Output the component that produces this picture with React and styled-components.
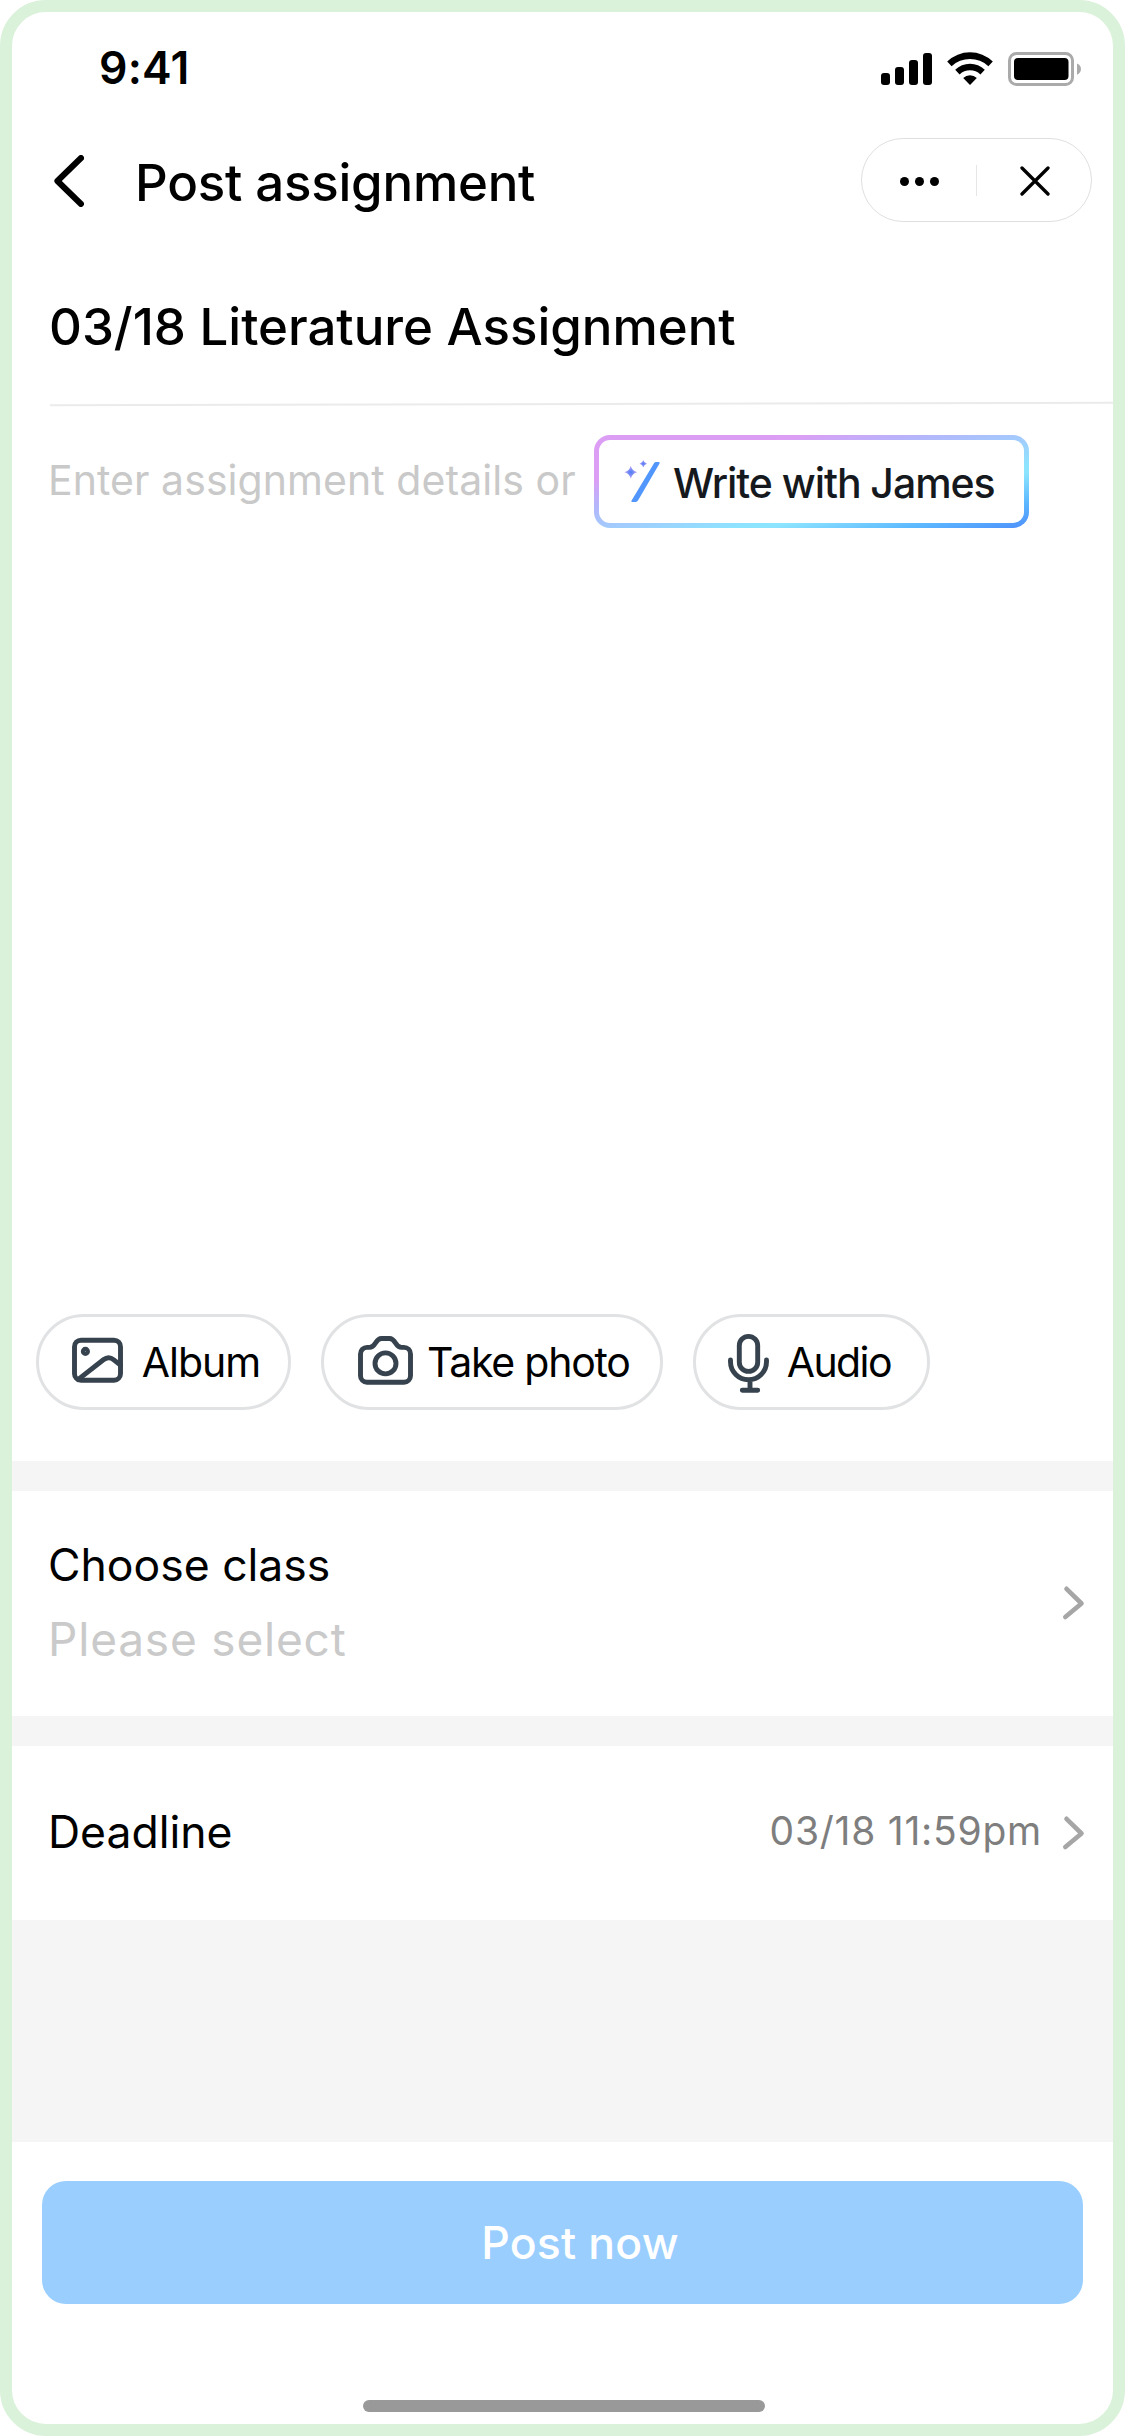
import React from 'react';
import styled, { createGlobalStyle } from 'styled-components';

const GlobalStyle = createGlobalStyle`
  * {
    box-sizing: border-box;
  }
  body {
    margin: 0;
    background: #fff;
    font-family: Inter, 'Liberation Sans', sans-serif;
  }
`;
const Phone = styled.div`
  width: 1125px;
  height: 2436px;
  display: flex;
  flex-direction: column;
  border: 12px solid #daf1da;
  border-radius: 46px;
  background: #fff;
  color: #000;
  overflow: hidden;
`;
const StatusBar = styled.div`
  height: 112px;
  display: flex;
  align-items: center;
  justify-content: space-between;
  padding: 0 31px 0 87px;
  flex-shrink: 0;
`;
const Clock = styled.span`
  font-size: 44.5px;
  font-weight: 600;
  letter-spacing: 0.2px;
`;
const StatusIcons = styled.svg`
  margin-top: 2px;
`;
const Header = styled.div`
  height: 114px;
  display: flex;
  align-items: center;
  padding: 0 21px 0 42px;
  flex-shrink: 0;
`;
const HeaderTitle = styled.h1`
  margin: 4px 0 0 51px;
  font-size: 51px;
  line-height: 60px;
  font-weight: 500;
  letter-spacing: -0.25px;
`;
const Capsule = styled.div`
  width: 231px;
  height: 84px;
  margin: 0 0 2px auto;
  display: flex;
  align-items: center;
  border: 1.5px solid #dfdfdf;
  border-radius: 42px;
`;
const CapsuleButton = styled.div`
  width: 115px;
  display: flex;
  justify-content: center;
  padding: 2px 0 0 2px;
`;
const CapsuleLine = styled.div`
  width: 2px;
  height: 31px;
  background: #e6e6e6;
`;
const AssignmentTitle = styled.h2`
  height: 165px;
  margin: 0;
  padding: 59px 0 0 37px;
  font-size: 51px;
  line-height: 60px;
  font-weight: 500;
  letter-spacing: -0.02px;
  flex-shrink: 0;
`;
const TitleDivider = styled.div`
  height: 2px;
  margin-left: 38px;
  background: #ebebeb;
  transform: rotate(-0.145deg);
  flex-shrink: 0;
`;
const Editor = styled.div`
  height: 909px;
  display: flex;
  align-items: flex-start;
  padding: 30px 0 0 36px;
  flex-shrink: 0;
`;
const Placeholder = styled.div`
  width: 546px;
  font-size: 41px;
  line-height: 91px;
  letter-spacing: 0.06px;
  color: #c9c9c9;
  white-space: nowrap;
`;
const WriteButton = styled.div`
  width: 435px;
  height: 93px;
  display: flex;
  align-items: center;
  padding-left: 24px;
  border: 5px solid transparent;
  border-radius: 16px;
  background:
    linear-gradient(#fff, #fff) padding-box,
    linear-gradient(to bottom right, #dc9ef5 24%, #b5b5fb 38%, #8de4ff 66%, #8de4ff 70%, #5cb8ff 86%, #4d8ffb 100%) border-box;
`;
const WriteLabel = styled.span`
  margin: 3px 0 0 11px;
  font-size: 41px;
  line-height: 60px;
  font-weight: 500;
  letter-spacing: -1.05px;
  color: #15191d;
  white-space: nowrap;
`;
const Chips = styled.div`
  height: 147px;
  display: flex;
  align-items: flex-start;
  gap: 30px;
  padding-left: 24px;
  flex-shrink: 0;
`;
const Chip = styled.div`
  width: ${(props) => props.$width}px;
  height: 96px;
  display: flex;
  align-items: center;
  gap: ${(props) => props.$gap}px;
  padding-left: ${(props) => props.$pad}px;
  border: 3px solid #e1e2e4;
  border-radius: 48px;
  font-size: 41px;
  letter-spacing: ${(props) => props.$spacing}px;
  white-space: nowrap;
`;
const ChipIcon = styled.svg`
  height: 64px;
  fill: none;
  stroke: #36424d;
  stroke-width: 4.9;
  stroke-linecap: round;
  stroke-linejoin: round;
`;
const Band = styled.div`
  height: ${(props) => props.$height}px;
  background: #f5f5f5;
  flex-shrink: 0;
`;
const OptionRow = styled.div`
  height: ${(props) => props.$height}px;
  display: flex;
  align-items: center;
  padding: 0 28px 0 36px;
  flex-shrink: 0;
`;
const OptionText = styled.div`
  display: flex;
  flex-direction: column;
  gap: 14px;
  margin-right: auto;
  padding-bottom: 3px;
`;
const OptionLabel = styled.div`
  font-size: 44.5px;
  line-height: 60px;
`;
const OptionHint = styled.div`
  font-size: 46px;
  line-height: 60px;
  letter-spacing: 0.81px;
  color: #cacaca;
`;
const OptionValue = styled.div`
  margin: 0 20px 4px 0;
  font-size: 39px;
  line-height: 60px;
  letter-spacing: 0.76px;
  color: #7e7e7e;
`;
const Arrow = styled.svg`
  margin-bottom: 1px;
  fill: none;
  stroke: #a6a6a6;
  stroke-width: 4.6;
  stroke-linecap: round;
  stroke-linejoin: round;
`;
const Footer = styled.div`
  flex: 1;
  display: flex;
  flex-direction: column;
  justify-content: space-between;
  padding: 39px 30px 12px;
`;
const PostButton = styled.div`
  height: 123px;
  display: flex;
  align-items: center;
  justify-content: center;
  padding: 1px 0 0 35px;
  border-radius: 24px;
  background: #99ceff;
  color: #fff;
  font-size: 44.5px;
  font-weight: 500;
  letter-spacing: 0.2px;
`;
const HomeIndicator = styled.div`
  width: 402px;
  height: 12px;
  margin-left: 321px;
  border-radius: 6px;
  background: #999;
`;

const StatusGlyphs = () => (
  <StatusIcons width="201" height="34" viewBox="0 0 201 34">
    <rect x="0" y="21" width="9" height="12" rx="3" />
    <rect x="14" y="15" width="9" height="18" rx="3" />
    <rect x="28" y="8" width="9" height="25" rx="3" />
    <rect x="42" y="1" width="9" height="32" rx="3" />
    <path d="M66.2 9.5 A33 33 0 0 1 111.8 9.5 L107.4 14.2 A27 27 0 0 0 70.6 14.2 Z" />
    <path d="M74.2 17.8 A21.3 21.3 0 0 1 103.8 17.8 L99.4 22.5 A15 15 0 0 0 78.6 22.5 Z" />
    <path d="M82.2 26.1 A9.8 9.8 0 0 1 95.8 26.1 L89 33 Z" />
    <rect x="128.5" y="1.5" width="63" height="31" rx="7" fill="none" stroke="#aaa" strokeWidth="3" />
    <rect x="133" y="6" width="54.5" height="22" rx="4" />
    <path d="M196 11.5 C201.3 13.5 201.3 20.5 196 22.8 Z" fill="#aaa" />
  </StatusIcons>
);

const RightArrow = () => (
  <Arrow width="23" height="36" viewBox="0 0 23 36">
    <path d="M4.5 3.8 L19.5 18.5 L3.3 32" />
  </Arrow>
);

const App = () => (
  <>
    <GlobalStyle />
    <Phone>
      <StatusBar>
        <Clock>9:41</Clock>
        <StatusGlyphs />
      </StatusBar>

      <Header>
        <svg width="30" height="52" viewBox="0 0 30 52" fill="none" stroke="#000" strokeWidth="6" strokeLinecap="round" strokeLinejoin="round">
          <path d="M27 3 L3.4 26 L27 49" />
        </svg>
        <HeaderTitle>Post assignment</HeaderTitle>
        <Capsule>
          <CapsuleButton>
            <svg width="39" height="9" viewBox="0 0 39 9">
              <circle cx="4.5" cy="4.5" r="4.5" />
              <circle cx="19.5" cy="4.5" r="4.5" />
              <circle cx="34.5" cy="4.5" r="4.5" />
            </svg>
          </CapsuleButton>
          <CapsuleLine />
          <CapsuleButton>
            <svg width="30" height="30" viewBox="0 0 30 30" stroke="#000" strokeWidth="3.3" strokeLinecap="round">
              <path d="M2 2 L28 28 M28 2 L2 28" />
            </svg>
          </CapsuleButton>
        </Capsule>
      </Header>

      <AssignmentTitle>03/18 Literature Assignment</AssignmentTitle>
      <TitleDivider />
      <Editor>
        <Placeholder>Enter assignment details or</Placeholder>
        <WriteButton>
          <svg width="39" height="46" viewBox="0 0 39 46">
            <defs>
              <radialGradient id="star">
                <stop offset="0" stopColor="#4a7df8" />
                <stop offset="1" stopColor="#c3a6f2" />
              </radialGradient>
            </defs>
            <path d="M31 4.2 Q31.8 3 33 3 H35.6 Q37.4 3 36.5 4.6 L15 41.6 Q14.2 43 12.6 43 H9.4 Q7.6 43 8.6 41.4 Z" fill="#5096fd" />
            <path d="M7.8 6.8 Q9 12 14.3 13.2 Q9 14.4 7.8 19.8 Q6.6 14.4 1.3 13.2 Q6.6 12 7.8 6.8 Z" fill="url(#star)" />
            <path d="M20.3 1 Q21.1 4 24.1 4.8 Q21.1 5.6 20.3 8.6 Q19.5 5.6 16.5 4.8 Q19.5 4 20.3 1 Z" fill="url(#star)" />
          </svg>
          <WriteLabel>Write with James</WriteLabel>
        </WriteButton>
      </Editor>

      <Chips>
        <Chip $width={255} $pad={33} $gap={18.7} $spacing={-0.99}>
          <ChipIcon width="51" viewBox="0 0 51 64">
            <rect x="2.5" y="10.2" width="46" height="40" rx="6.5" />
            <path d="M6 49.6 L31.4 29.8 Q36.6 25.6 41.8 29.8 L48.5 35.2" />
            <circle cx="13.4" cy="21.4" r="2.1" />
          </ChipIcon>
          Album
        </Chip>
        <Chip $width={342} $pad={34} $gap={14} $spacing={-1.24}>
          <ChipIcon width="55" viewBox="0 0 55 64">
            <path d="M9 17.4 H11.5 C18 17.4 17 8.5 23.5 8.5 H31.5 C38 8.5 37 17.4 43.5 17.4 H46 A6.5 6.5 0 0 1 52.5 23.9 V45.7 A6.5 6.5 0 0 1 46 52.2 H9 A6.5 6.5 0 0 1 2.5 45.7 V23.9 A6.5 6.5 0 0 1 9 17.4 Z" />
            <circle cx="27.5" cy="33.4" r="10.5" />
          </ChipIcon>
          Take photo
        </Chip>
        <Chip $width={237} $pad={32} $gap={17.7} $spacing={-1.57}>
          <ChipIcon width="41" viewBox="0 0 41 64">
            <rect x="11.3" y="6.4" width="18.4" height="35" rx="9.2" />
            <path d="M2.5 30 V31.7 A18 18 0 0 0 38.5 31.7 V30 M22 51 V59 M14.3 60.3 H29.7" />
          </ChipIcon>
          Audio
        </Chip>
      </Chips>

      <Band $height={30} />
      <OptionRow $height={225}>
        <OptionText>
          <OptionLabel>Choose class</OptionLabel>
          <OptionHint>Please select</OptionHint>
        </OptionText>
        <RightArrow />
      </OptionRow>
      <Band $height={30} />
      <OptionRow $height={174}>
        <OptionText>
          <OptionLabel>Deadline</OptionLabel>
        </OptionText>
        <OptionValue>03/18 11:59pm</OptionValue>
        <RightArrow />
      </OptionRow>
      <Band $height={222} />

      <Footer>
        <PostButton>Post now</PostButton>
        <HomeIndicator />
      </Footer>
    </Phone>
  </>
);

export default App;
